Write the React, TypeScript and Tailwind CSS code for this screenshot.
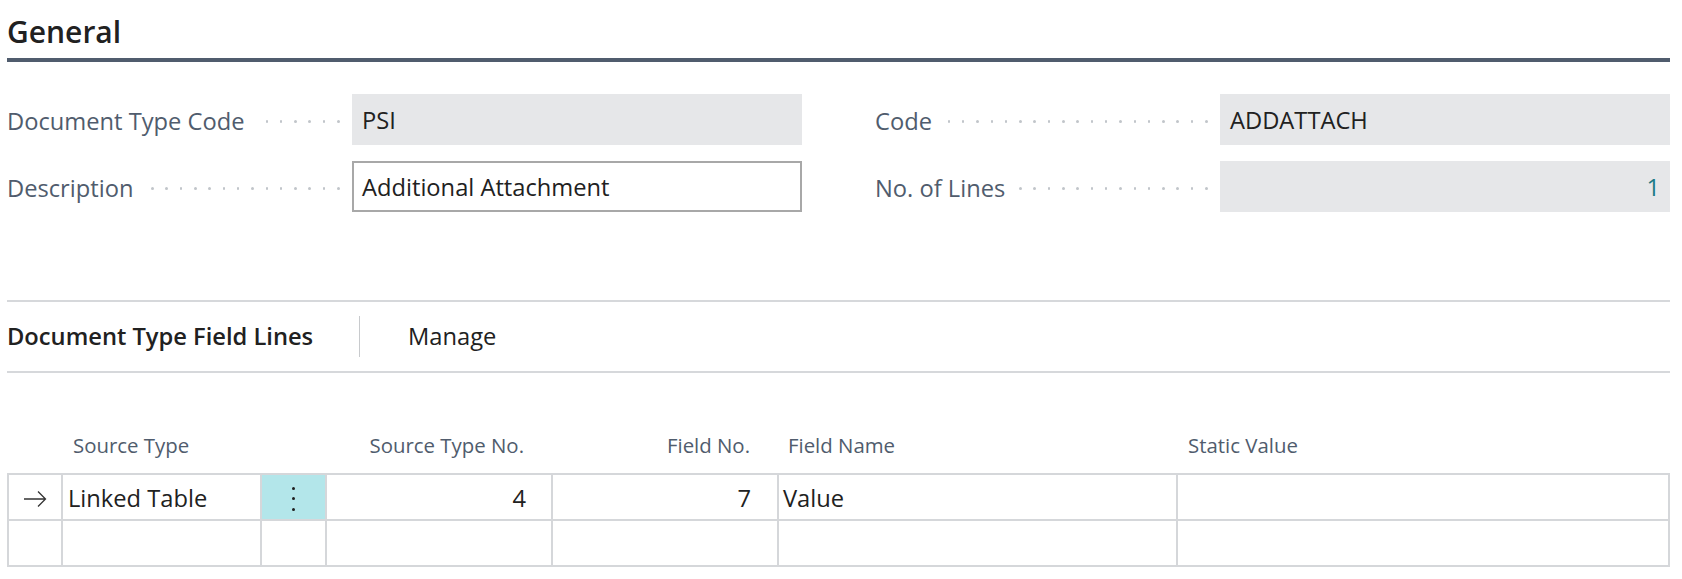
import React from "react";

function Leader() {
  return (
    <span className="ml-[12px] mr-[12.5px] flex h-[4px] flex-1 items-center justify-end gap-[11.8px] overflow-hidden">
      {Array.from({ length: 40 }).map((_, i) => (
        <span key={i} className="h-[2.5px] w-[2.5px] shrink-0 rounded-full bg-[#c1c5ca]" />
      ))}
    </span>
  );
}

function Field({
  label,
  value,
  variant = "readonly",
  align = "left",
}: {
  label: string;
  value: string;
  variant?: "readonly" | "input";
  align?: "left" | "right";
}) {
  return (
    <div className="flex h-[51px] items-center">
      <div className="flex h-full w-[345px] items-center pt-[4px]">
        <span className="whitespace-nowrap text-[23.7px] leading-none text-[#505c6d]">{label}</span>
        <Leader />
      </div>
      {variant === "input" ? (
        <div className="flex h-full flex-1 items-center border-2 border-[#a8a8a8] bg-white px-[8px] pt-[3px] text-[23.7px] text-[#212121]">
          {value}
        </div>
      ) : (
        <div
          className={`flex h-full flex-1 items-center bg-[#e6e7e9] px-[10px] pt-[3px] text-[23.7px] ${
            align === "right" ? "justify-end text-[#1b7a86]" : "text-[#212121]"
          }`}
        >
          {value}
        </div>
      )}
    </div>
  );
}

const cols = "grid grid-cols-[54px_199px_65px_226px_226px_399px_1fr]";
const cell = "h-[46px] border-r-2 border-b-2 border-[#d5d7da] flex items-center pt-[3px] text-[23.7px] text-[#212121]";

function Arrow() {
  return (
    <svg width="24" height="18" viewBox="0 0 24 18" fill="none">
      <path d="M1 9H22.5M15 1.5L22.5 9L15 16.5" stroke="#333" strokeWidth="1.3" />
    </svg>
  );
}

function VDots() {
  return (
    <div className="flex flex-col items-center gap-[7.5px]">
      <span className="h-[3px] w-[3px] rounded-full bg-[#1f1f1f]" />
      <span className="h-[3px] w-[3px] rounded-full bg-[#1f1f1f]" />
      <span className="h-[3px] w-[3px] rounded-full bg-[#1f1f1f]" />
    </div>
  );
}

export default function App() {
  return (
    <div className="h-[579px] w-[1682px] overflow-hidden bg-white pl-[7px] pr-[12px] font-['Open_Sans',sans-serif]">
      <div className="border-b-4 border-[#505c6d] pb-[6px] pt-[12px]">
        <h2 className="text-[30px] font-semibold leading-[40px] text-[#212121]">General</h2>
      </div>

      <div className="mt-[32px] grid grid-cols-2 gap-x-[73px] gap-y-[16px]">
        <Field label="Document Type Code" value="PSI" />
        <Field label="Code" value="ADDATTACH" />
        <Field label="Description" value="Additional Attachment" variant="input" />
        <Field label="No. of Lines" value="1" align="right" />
      </div>

      <div className="mt-[88px] flex h-[73px] items-center border-y-2 border-[#d6d8db]">
        <div className="w-[352px] text-[23.7px] font-semibold text-[#212121]">Document Type Field Lines</div>
        <div className="h-[41px] w-px bg-[#c8cacd]" />
        <div className="ml-[48px] text-[23.7px] text-[#212121]">Manage</div>
      </div>

      <div className={`${cols} mt-[58px] h-[28px] pl-[2px] text-[20.4px] leading-[28px] text-[#505c6d]`}>
        <div />
        <div className="whitespace-nowrap pl-[10px]">Source Type</div>
        <div />
        <div className="whitespace-nowrap pr-[29px] text-right">Source Type No.</div>
        <div className="whitespace-nowrap pr-[29px] text-right">Field No.</div>
        <div className="whitespace-nowrap pl-[9px]">Field Name</div>
        <div className="whitespace-nowrap pl-[10px]">Static Value</div>
      </div>

      <div className={`${cols} mt-[14px] border-l-2 border-t-2 border-[#d5d7da]`}>
        <div className={`${cell} justify-center pt-0`}>
          <Arrow />
        </div>
        <div className={`${cell} pl-[5px]`}>Linked Table</div>
        <div className={`${cell} justify-center bg-[#b3e6ea] pt-0`}>
          <VDots />
        </div>
        <div className={`${cell} justify-end pr-[25px]`}>4</div>
        <div className={`${cell} justify-end pr-[26px]`}>7</div>
        <div className={`${cell} pl-[4px]`}>Value</div>
        <div className={cell} />

        <div className={cell} />
        <div className={cell} />
        <div className={cell} />
        <div className={cell} />
        <div className={cell} />
        <div className={cell} />
        <div className={cell} />
      </div>
    </div>
  );
}
